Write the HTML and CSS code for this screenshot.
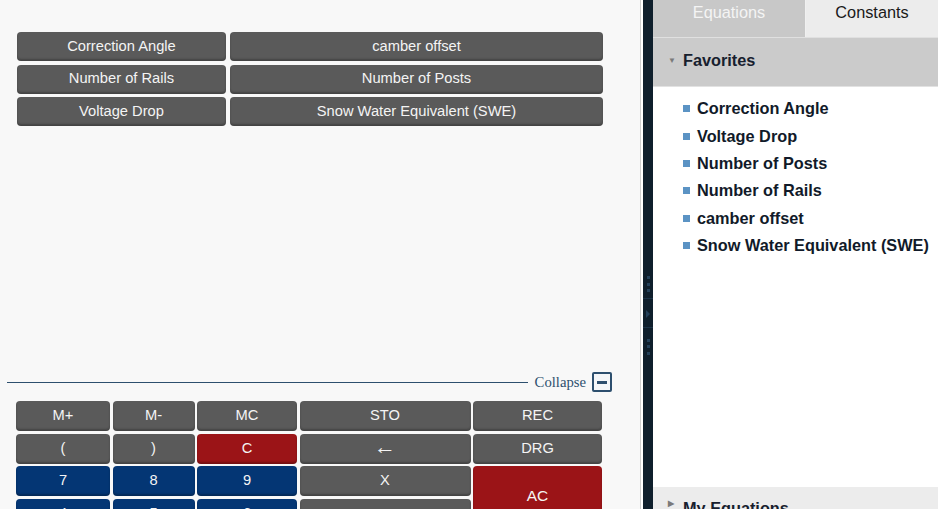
FILE: index.html
```html
<!DOCTYPE html>
<html lang="en">
  <head>
    <meta charset="UTF-8" />
    <title>Calculator</title>
    <link rel="stylesheet" href="styles.css">
  </head>

  <body>
    <div class="workspace">
      <div class="fav-buttons">
        <button class="key">Correction Angle</button>
        <button class="key">camber offset</button>
        <button class="key">Number of Rails</button>
        <button class="key">Number of Posts</button>
        <button class="key">Voltage Drop</button>
        <button class="key">Snow Water Equivalent (SWE)</button>
      </div>

      <div class="collapse-row">
        <span class="rule"></span>
        <span class="collapse-label">Collapse</span>
        <span class="collapse-icon"><span></span></span>
      </div>

      <div class="keypad">
        <button class="key">M+</button>
        <button class="key">M-</button>
        <button class="key">MC</button>
        <button class="key">STO</button>
        <button class="key">REC</button>

        <button class="key">(</button>
        <button class="key">)</button>
        <button class="key red">C</button>
        <button class="key arrow-key">&larr;</button>
        <button class="key">DRG</button>

        <button class="key blue">7</button>
        <button class="key blue">8</button>
        <button class="key blue">9</button>
        <button class="key">X</button>
        <button class="key red ac">AC</button>

        <button class="key blue">4</button>
        <button class="key blue">5</button>
        <button class="key blue">6</button>
        <button class="key">&divide;</button>
      </div>
    </div>

    <div class="splitter">
      <span class="dot"></span><span class="dot"></span><span class="dot"></span>
      <span class="sep"></span>
      <span class="arrow"></span>
      <span class="sep"></span>
      <span class="dot"></span><span class="dot"></span><span class="dot"></span>
    </div>

    <div class="sidebar">
      <div class="tabs">
        <div class="tab active">Equations</div>
        <div class="tab">Constants</div>
      </div>

      <div class="group-head open"><span class="caret">&#9660;</span>Favorites</div>
      <ul class="group-list">
        <li>Correction Angle</li>
        <li>Voltage Drop</li>
        <li>Number of Posts</li>
        <li>Number of Rails</li>
        <li>camber offset</li>
        <li>Snow Water Equivalent (SWE)</li>
      </ul>

      <div class="group-head closed"><span class="caret">&#9654;</span>My Equations</div>
    </div>
  </body>
</html>
```

FILE: styles.css
```css
body {
  margin: 0;
  font-family: 'Liberation Sans', Arial, sans-serif;
  display: flex;
  height: 509px;
  overflow: hidden;
  background-color: #fff;
}

.workspace {
  width: 640px;
  flex-shrink: 0;
  background-color: #f8f8f8;
  border-right: 1px solid #cfcfcf;
  padding-top: 32px;
  box-sizing: content-box;
}

.key {
  background-color: #5a5a5a;
  color: #f4f4f4;
  border: none;
  border-radius: 4px;
  box-shadow: inset 0 -2px 2px rgba(0, 0, 0, 0.25);
  font-family: 'Liberation Sans', Arial, sans-serif;
  font-size: 14.7px;
  padding: 0 0 2px;
  cursor: pointer;
  outline: none;
}

.key.red {
  background-color: #9b1417;
}

.key.blue {
  background-color: #043674;
}

.arrow-key {
  font-size: 22px;
  padding-bottom: 4px;
}

.fav-buttons {
  display: grid;
  grid-template-columns: 209px 373px;
  grid-auto-rows: 29px;
  column-gap: 4px;
  row-gap: 3.5px;
  margin-left: 17px;
}

.collapse-row {
  display: flex;
  align-items: center;
  height: 20px;
  margin-top: 246px;
  padding: 0 28px 0 7px;
}

.rule {
  flex: 1;
  height: 1px;
  background-color: #2d4f6e;
}

.collapse-label {
  font-family: 'Liberation Serif', 'Times New Roman', serif;
  font-size: 14.7px;
  color: #2d4f6e;
  margin: 0 6px 0 7px;
}

.collapse-icon {
  width: 16px;
  height: 16px;
  border: 2px solid #2d4f6e;
  border-radius: 2px;
  display: flex;
  align-items: center;
  justify-content: center;
  background-color: #f4f6f8;
}

.collapse-icon span {
  width: 10px;
  height: 3px;
  background-color: #2d4f6e;
}

.keypad {
  display: grid;
  grid-template-columns: 94px 82px 100px 171px 129px;
  grid-auto-rows: 30px;
  column-gap: 2.5px;
  row-gap: 2.5px;
  margin: 9px 0 0 16px;
}

.ac {
  grid-row: span 2;
  font-size: 15.5px;
}

.splitter {
  width: 10px;
  flex-shrink: 0;
  border-left: 2px solid #fff;
  background-color: #0f1f2c;
  display: flex;
  flex-direction: column;
  align-items: center;
  padding-top: 276px;
  box-sizing: content-box;
}

.splitter .dot {
  width: 3px;
  height: 3px;
  background-color: #24415a;
  margin-bottom: 3.5px;
}

.splitter .sep {
  width: 10px;
  height: 1px;
  background-color: #1c3347;
  margin: 2px 0 11px;
}

.splitter .arrow {
  width: 0;
  height: 0;
  border-top: 4px solid transparent;
  border-bottom: 4px solid transparent;
  border-left: 4px solid #24415a;
  margin-bottom: 7px;
}

.sidebar {
  flex: 1;
  display: flex;
  flex-direction: column;
  background-color: #fff;
}

.tabs {
  display: flex;
  height: 37px;
  flex-shrink: 0;
  border-bottom: 1px solid #e0e0e0;
}

.tab {
  flex: 1;
  display: flex;
  align-items: center;
  justify-content: center;
  font-size: 16.3px;
  color: #1a1a1a;
  background-color: #ececec;
  padding-bottom: 12px;
  box-sizing: border-box;
}

.tab.active {
  flex: 0 0 153px;
  background-color: #c8c8c8;
  color: #f4f4f4;
  border-right: 1px solid #f0f0f0;
}

.group-head {
  display: flex;
  align-items: center;
  font-size: 16.3px;
  font-weight: bold;
  color: #17202e;
  padding-left: 15px;
  flex-shrink: 0;
}

.group-head.open {
  height: 49px;
  background-color: #cbcbcb;
  border-bottom: 1px solid #e2e2e2;
  padding-bottom: 3px;
  box-sizing: border-box;
}

.group-head.closed {
  height: 40px;
  background-color: #ececec;
  align-items: flex-start;
  padding-top: 12px;
  box-sizing: border-box;
}

.caret {
  font-size: 8px;
  color: #7a7a7a;
  width: 15px;
}

.group-list {
  list-style: none;
  margin: 0;
  padding: 8px 0 0 30px;
  height: 400px;
  box-sizing: border-box;
  flex-shrink: 0;
}

.group-list li {
  display: flex;
  align-items: center;
  height: 27.4px;
  font-size: 16.3px;
  font-weight: bold;
  color: #111a29;
  white-space: nowrap;
}

.group-list li::before {
  content: "";
  width: 7px;
  height: 7px;
  background-color: #5b93c4;
  margin-right: 7px;
  flex-shrink: 0;
}
```
